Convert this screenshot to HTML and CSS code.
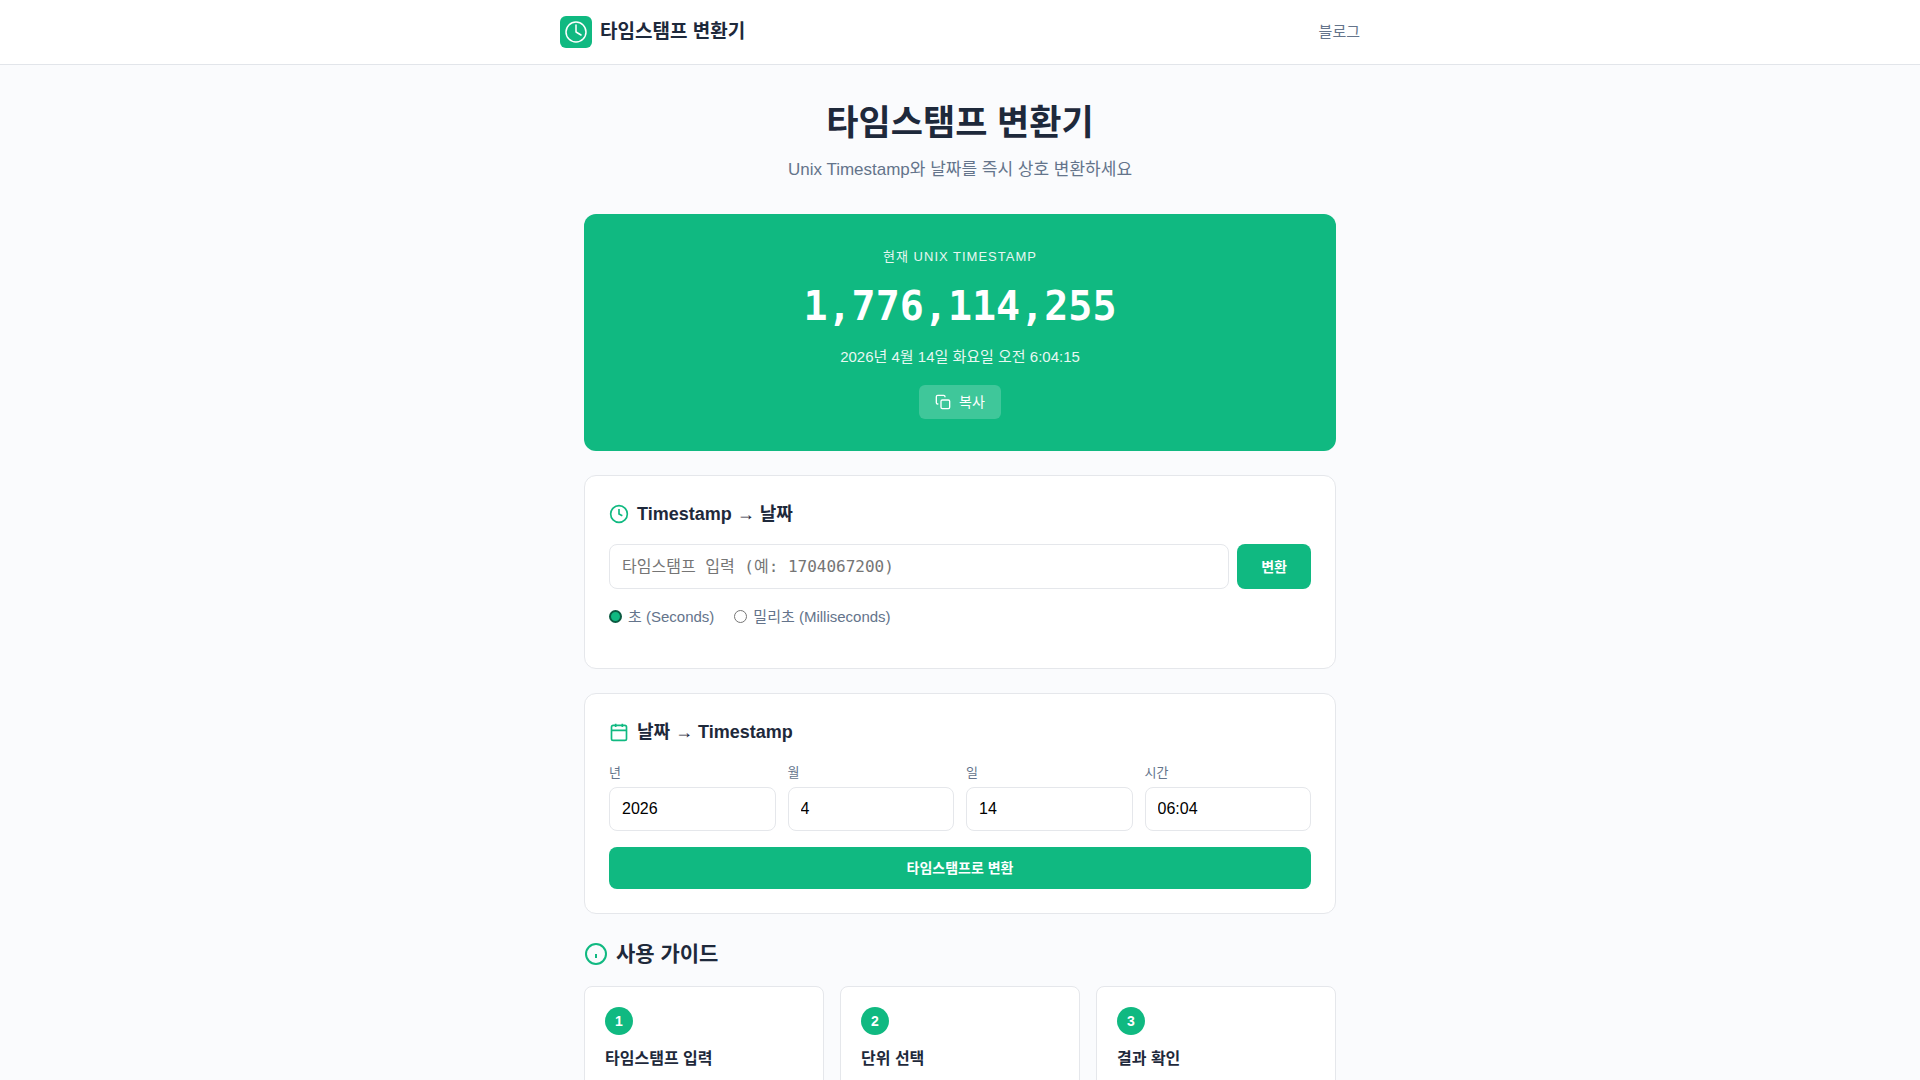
FILE: index.html
```html
<!DOCTYPE html>
<html lang="ko">
<head>
    <meta charset="UTF-8">
    <meta name="viewport" content="width=device-width, initial-scale=1.0">
    <title>타임스탬프 변환기</title>
    <link rel="stylesheet" href="styles.css">
</head>
<body>
    <header class="header">
        <div class="header-inner">
            <a href="#" class="logo">
                <span class="logo-icon">
                    <svg width="24" height="24" viewBox="0 0 24 24" fill="none" stroke="currentColor" stroke-width="1.5" stroke-linecap="round" stroke-linejoin="round"><circle cx="12" cy="12" r="10"/><path d="M12 5v7l5 3"/></svg>
                </span>
                타임스탬프 변환기
            </a>
            <nav>
                <a href="#" class="nav-link">블로그</a>
            </nav>
        </div>
    </header>

    <main class="container">
        <div class="page-header">
            <h1>타임스탬프 변환기</h1>
            <p>Unix Timestamp와 날짜를 즉시 상호 변환하세요</p>
        </div>

        <section class="current">
            <div class="current-label">현재 Unix Timestamp</div>
            <div class="current-value">1,776,114,255</div>
            <div class="current-date">2026년 4월 14일 화요일 오전 6:04:15</div>
            <button type="button" class="copy-btn">
                <svg width="16" height="16" viewBox="0 0 24 24" fill="none" stroke="currentColor" stroke-width="2"><rect x="9" y="9" width="13" height="13" rx="2"/><path d="M5 15H4a2 2 0 0 1-2-2V4a2 2 0 0 1 2-2h9a2 2 0 0 1 2 2v1"/></svg>
                복사
            </button>
        </section>

        <section class="card">
            <h2 class="card-title">
                <svg width="20" height="20" viewBox="0 0 24 24" fill="none" stroke="currentColor" stroke-width="2"><circle cx="12" cy="12" r="10"/><path d="M12 6v6l4 2"/></svg>
                Timestamp → 날짜
            </h2>
            <div class="input-row">
                <input type="text" class="input mono" id="timestamp" aria-label="타임스탬프" placeholder="타임스탬프 입력 (예: 1704067200)">
                <button type="button" class="btn">변환</button>
            </div>
            <div class="radios">
                <label><input type="radio" name="unit" value="s" checked>초 (Seconds)</label>
                <label><input type="radio" name="unit" value="ms">밀리초 (Milliseconds)</label>
            </div>
        </section>

        <section class="card">
            <h2 class="card-title">
                <svg width="20" height="20" viewBox="0 0 24 24" fill="none" stroke="currentColor" stroke-width="2"><rect x="3" y="4" width="18" height="18" rx="2"/><path d="M16 2v4M8 2v4M3 10h18"/></svg>
                날짜 → Timestamp
            </h2>
            <div class="date-grid">
                <div class="field">
                    <label for="year">년</label>
                    <input type="text" class="input" id="year" value="2026">
                </div>
                <div class="field">
                    <label for="month">월</label>
                    <input type="text" class="input" id="month" value="4">
                </div>
                <div class="field">
                    <label for="day">일</label>
                    <input type="text" class="input" id="day" value="14">
                </div>
                <div class="field">
                    <label for="time">시간</label>
                    <input type="text" class="input" id="time" value="06:04">
                </div>
            </div>
            <button type="button" class="btn btn-full">타임스탬프로 변환</button>
        </section>

        <section class="guide">
            <h2 class="guide-title">
                <svg width="24" height="24" viewBox="0 0 24 24" fill="none" stroke="currentColor" stroke-width="2"><circle cx="12" cy="12" r="10"/><path d="M12 12v4"/></svg>
                사용 가이드
            </h2>
            <div class="guide-grid">
                <div class="guide-card">
                    <div class="guide-num">1</div>
                    <h3>타임스탬프 입력</h3>
                </div>
                <div class="guide-card">
                    <div class="guide-num">2</div>
                    <h3>단위 선택</h3>
                </div>
                <div class="guide-card">
                    <div class="guide-num">3</div>
                    <h3>결과 확인</h3>
                </div>
            </div>
        </section>
    </main>
</body>
</html>
```
FILE: styles.css
```css
* {
    margin: 0;
    padding: 0;
    box-sizing: border-box;
}

body {
    font-family: "Liberation Sans", "Noto Sans CJK KR", sans-serif;
    background: #fafbfd;
    color: #1e293b;
    line-height: 24px;
}

svg {
    flex-shrink: 0;
}

button,
input {
    font-family: inherit;
}

.header {
    background: #fff;
    border-bottom: 1px solid #e2e5ea;
}

.header-inner {
    max-width: 800px;
    height: 64px;
    margin: 0 auto;
    display: flex;
    align-items: center;
    justify-content: space-between;
}

.logo {
    display: flex;
    align-items: center;
    gap: 8px;
    font-size: 19px;
    font-weight: 700;
    color: #1e293b;
    text-decoration: none;
}

.logo-icon {
    width: 32px;
    height: 32px;
    display: flex;
    align-items: center;
    justify-content: center;
    background: #10b981;
    color: #fff;
    border-radius: 6px;
}

.nav-link {
    font-size: 15px;
    color: #64748b;
    text-decoration: none;
}

.container {
    max-width: 800px;
    margin: 0 auto;
    padding: 32px 24px;
}

.page-header {
    text-align: center;
    margin-bottom: 32px;
}

.page-header h1 {
    font-size: 35px;
    line-height: 52px;
    margin-bottom: 8px;
}

.page-header p {
    font-size: 17px;
    line-height: 25px;
    color: #64748b;
}

.current {
    background: #10b981;
    color: #fff;
    border-radius: 12px;
    padding: 32px;
    margin-bottom: 24px;
    text-align: center;
}

.current-label {
    font-size: 13px;
    line-height: 21px;
    text-transform: uppercase;
    letter-spacing: 1px;
    opacity: 0.9;
    margin-bottom: 8px;
}

.current-value {
    font-family: "DejaVu Sans Mono", monospace;
    font-size: 40px;
    line-height: 62px;
    font-weight: 700;
    margin-bottom: 8px;
}

.current-date {
    font-size: 15px;
    opacity: 0.9;
    margin-bottom: 16px;
}

.copy-btn {
    display: flex;
    align-items: center;
    gap: 8px;
    margin: 0 auto;
    padding: 8px 16px;
    background: rgba(255, 255, 255, 0.2);
    color: #fff;
    border: none;
    border-radius: 6px;
    font-size: 14px;
    line-height: 18px;
    cursor: pointer;
}

.card {
    background: #fff;
    border: 1px solid #e5e7eb;
    border-radius: 12px;
    padding: 24px;
    margin-bottom: 24px;
}

.card-title {
    display: flex;
    align-items: center;
    gap: 8px;
    font-size: 18px;
    line-height: 28px;
    margin-bottom: 16px;
}

.card-title svg,
.guide-title svg {
    color: #10b981;
}

.input-row {
    display: flex;
    gap: 8px;
    margin-bottom: 16px;
}

.input {
    width: 100%;
    padding: 12px;
    background: #fff;
    color: #000;
    border: 1px solid #e5e7eb;
    border-radius: 8px;
    font-size: 16px;
}

.mono {
    flex: 1;
    font-family: "DejaVu Sans Mono", "Noto Sans CJK KR", monospace;
}

.btn {
    padding: 12px 24px;
    background: #10b981;
    color: #fff;
    border: none;
    border-radius: 8px;
    font-size: 14px;
    line-height: 18px;
    font-weight: 700;
    cursor: pointer;
}

.btn-full {
    width: 100%;
}

.radios {
    display: flex;
    gap: 20px;
    margin-bottom: 16px;
}

.radios label {
    display: flex;
    align-items: center;
    gap: 6px;
    font-size: 15px;
    line-height: 23px;
    color: #64748b;
}

.radios input {
    appearance: none;
    width: 13px;
    height: 13px;
    border: 1px solid #767676;
    border-radius: 50%;
}

.radios input:checked {
    border: 2px solid #0b5a41;
    background: #10b981;
}

.date-grid {
    display: grid;
    grid-template-columns: repeat(4, 1fr);
    gap: 12px;
    margin-bottom: 16px;
}

.field label {
    display: block;
    font-size: 13px;
    line-height: 21px;
    color: #64748b;
    margin-bottom: 4px;
}

.guide-title {
    display: flex;
    align-items: center;
    gap: 8px;
    font-size: 21px;
    line-height: 32px;
    margin-bottom: 16px;
}

.guide-grid {
    display: grid;
    grid-template-columns: repeat(3, 1fr);
    gap: 16px;
}

.guide-card {
    background: #fff;
    border: 1px solid #e5e7eb;
    border-radius: 8px;
    padding: 20px;
    min-height: 160px;
}

.guide-num {
    width: 28px;
    height: 28px;
    display: flex;
    align-items: center;
    justify-content: center;
    background: #10b981;
    color: #fff;
    border-radius: 50%;
    font-size: 14px;
    font-weight: 700;
    margin-bottom: 12px;
}

.guide-card h3 {
    font-size: 16px;
}
```
